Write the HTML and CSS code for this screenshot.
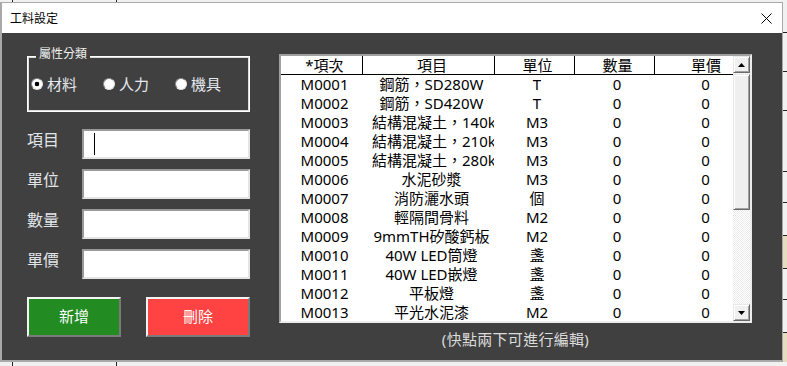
FILE: index.html
```html
<!DOCTYPE html>
<html lang="zh-Hant">
<head>
<meta charset="utf-8">
<title>工料設定</title>
<link rel="stylesheet" href="styles.css">
</head>
<body>
<div class="window">
  <div class="titlebar">
    <span class="title">工料設定</span>
    <svg class="close" width="11" height="11" viewBox="0 0 11 11"><path d="M0.5 0.5L10.5 10.5M10.5 0.5L0.5 10.5" stroke="#000" stroke-width="1" fill="none"/></svg>
  </div>
  <div class="client">
    <div class="left">
      <div class="group">
        <span class="legend">屬性分類</span>
        <div class="radios">
          <div class="radio-item"><span class="radio checked"></span><span class="rlabel">材料</span></div>
          <div class="radio-item"><span class="radio"></span><span class="rlabel">人力</span></div>
          <div class="radio-item"><span class="radio"></span><span class="rlabel">機具</span></div>
        </div>
      </div>
      <div class="fields">
        <div class="field"><span class="flabel">項目</span><div class="textbox"><span class="caret"></span></div></div>
        <div class="field"><span class="flabel">單位</span><div class="textbox"></div></div>
        <div class="field"><span class="flabel">數量</span><div class="textbox"></div></div>
        <div class="field"><span class="flabel">單價</span><div class="textbox"></div></div>
      </div>
      <div class="buttons">
        <div class="btn btn-add">新增</div>
        <div class="btn btn-del">刪除</div>
      </div>
    </div>
    <div class="right">
      <div class="listbox">
        <div class="list">
          <div class="row head"><span class="c1">*項次</span><span class="c2">項目</span><span class="c3">單位</span><span class="c4">數量</span><span class="c5">單價</span></div>
          <div class="row"><span class="c1">M0001</span><span class="c2">鋼筋，SD280W</span><span class="c3">T</span><span class="c4">0</span><span class="c5">0</span></div>
          <div class="row"><span class="c1">M0002</span><span class="c2">鋼筋，SD420W</span><span class="c3">T</span><span class="c4">0</span><span class="c5">0</span></div>
          <div class="row"><span class="c1">M0003</span><span class="c2">結構混凝土，140kgf/cm2</span><span class="c3">M3</span><span class="c4">0</span><span class="c5">0</span></div>
          <div class="row"><span class="c1">M0004</span><span class="c2">結構混凝土，210kgf/cm2</span><span class="c3">M3</span><span class="c4">0</span><span class="c5">0</span></div>
          <div class="row"><span class="c1">M0005</span><span class="c2">結構混凝土，280kgf/cm2</span><span class="c3">M3</span><span class="c4">0</span><span class="c5">0</span></div>
          <div class="row"><span class="c1">M0006</span><span class="c2">水泥砂漿</span><span class="c3">M3</span><span class="c4">0</span><span class="c5">0</span></div>
          <div class="row"><span class="c1">M0007</span><span class="c2">消防灑水頭</span><span class="c3">個</span><span class="c4">0</span><span class="c5">0</span></div>
          <div class="row"><span class="c1">M0008</span><span class="c2">輕隔間骨料</span><span class="c3">M2</span><span class="c4">0</span><span class="c5">0</span></div>
          <div class="row"><span class="c1">M0009</span><span class="c2">9mmTH矽酸鈣板</span><span class="c3">M2</span><span class="c4">0</span><span class="c5">0</span></div>
          <div class="row"><span class="c1">M0010</span><span class="c2">40W LED筒燈</span><span class="c3">盞</span><span class="c4">0</span><span class="c5">0</span></div>
          <div class="row"><span class="c1">M0011</span><span class="c2">40W LED嵌燈</span><span class="c3">盞</span><span class="c4">0</span><span class="c5">0</span></div>
          <div class="row"><span class="c1">M0012</span><span class="c2">平板燈</span><span class="c3">盞</span><span class="c4">0</span><span class="c5">0</span></div>
          <div class="row"><span class="c1">M0013</span><span class="c2">平光水泥漆</span><span class="c3">M2</span><span class="c4">0</span><span class="c5">0</span></div>
        </div>
        <div class="scrollbar">
          <div class="sb-btn"><svg width="7" height="4" viewBox="0 0 7 4"><polygon points="3.5,0 7,4 0,4" fill="#000"/></svg></div>
          <div class="sb-track"><div class="sb-thumb"></div></div>
          <div class="sb-btn"><svg width="7" height="4" viewBox="0 0 7 4"><polygon points="0,0 7,0 3.5,4" fill="#000"/></svg></div>
        </div>
      </div>
      <div class="hint">(快點兩下可進行編輯)</div>
    </div>
  </div>
</div>
</body>
</html>
```

FILE: styles.css
```css
html, body {
  margin: 0;
  padding: 0;
  width: 787px;
  height: 366px;
  overflow: hidden;
}

body {
  font-family: "Noto Sans", "Noto Sans CJK TC", sans-serif;
  background:
    linear-gradient(#222, #222) 0 32px / 100% 1px no-repeat,
    linear-gradient(#222, #222) 0 71px / 100% 1px no-repeat,
    linear-gradient(#222, #222) 0 110px / 100% 1px no-repeat,
    linear-gradient(#222, #222) 0 171px / 100% 1px no-repeat,
    linear-gradient(#222, #222) 0 202px / 100% 1px no-repeat,
    linear-gradient(#222, #222) 0 235px / 100% 1px no-repeat,
    linear-gradient(#222, #222) 0 268px / 100% 1px no-repeat,
    linear-gradient(#222, #222) 0 299px / 100% 1px no-repeat,
    linear-gradient(#222, #222) 0 332px / 100% 1px no-repeat,
    linear-gradient(#222, #222) 12px 0 / 1px 100% no-repeat,
    linear-gradient(#222, #222) 116px 0 / 1px 100% no-repeat,
    linear-gradient(#e6dcc0, #e6dcc0) 0 236px / 100% 32px no-repeat,
    linear-gradient(#e6dcc0, #e6dcc0) 0 333px / 100% 29px no-repeat,
    #f1f1f1;
}

.window {
  width: 783px;
  margin-top: 2px;
  box-sizing: border-box;
  border-style: solid;
  border-color: #a9a9a9;
  border-width: 1px 1px 2px 2px;
  background: #404040;
}

.titlebar {
  height: 30px;
  background: #fff;
  display: flex;
  align-items: center;
  justify-content: space-between;
  padding: 0 10px 0 8px;
}

.title {
  font-family: "Noto Sans CJK TC", sans-serif;
  font-size: 12px;
  line-height: 16px;
  color: #000;
}

.close {
  display: block;
}

.client {
  height: 327px;
  box-sizing: border-box;
  padding: 21px 30px 0 25px;
  display: flex;
  align-items: flex-start;
  gap: 29px;
}

.left {
  width: 223px;
}

.group {
  position: relative;
  margin-top: 2px;
  height: 56px;
  box-sizing: border-box;
  border: 1px solid #ffffff;
  box-shadow: inset 0 0 0 1px #dcdcdc;
}

.legend {
  position: absolute;
  left: 8px;
  top: -11px;
  padding: 0 3px;
  background: #404040;
  color: #f2f2f2;
  font-size: 12px;
  line-height: 16px;
}

.radios {
  height: 100%;
  display: flex;
  align-items: center;
  padding-left: 3px;
}

.radio-item {
  width: 72px;
  display: flex;
  align-items: center;
  gap: 4px;
}

.radio {
  width: 12px;
  height: 12px;
  box-sizing: border-box;
  border-radius: 50%;
  border: 1px solid;
  border-color: #8a8a8a #e6e6e6 #e6e6e6 #8a8a8a;
  background: #fff;
}

.radio.checked {
  background: radial-gradient(circle, #000 0 2px, #fff 2.6px);
}

.rlabel {
  font-size: 15px;
  line-height: 20px;
  color: #e4e9ee;
}

.fields {
  margin-top: 17px;
  display: flex;
  flex-direction: column;
  gap: 10px;
}

.field {
  display: flex;
  height: 30px;
}

.flabel {
  width: 55px;
  font-size: 16px;
  line-height: 22px;
  color: #e2e6ea;
}

.textbox {
  width: 168px;
  height: 30px;
  box-sizing: border-box;
  border: 2px solid;
  border-color: #999 #e4e4e4 #e4e4e4 #999;
  background: #fff;
  padding: 2px 0 0 10px;
}

.caret {
  display: block;
  width: 1px;
  height: 22px;
  background: #000;
}

.buttons {
  margin-top: 18px;
  display: flex;
  gap: 25px;
}

.btn {
  height: 40px;
  box-sizing: border-box;
  border: 2px solid;
  border-color: #f4f4f4 #7a7a7a #7a7a7a #f4f4f4;
  color: #fff;
  font-size: 15px;
  line-height: 35px;
  text-align: center;
}

.btn-add {
  width: 94px;
  background: #228b22;
}

.btn-del {
  width: 104px;
  background: #ff4242;
}

.right {
  width: 473px;
}

.listbox {
  height: 269px;
  box-sizing: border-box;
  border: 2px solid;
  border-color: #a0a0a0 #ececec #ececec #a0a0a0;
  background: #fff;
  display: flex;
}

.list {
  width: 452px;
  overflow: hidden;
}

.row {
  display: grid;
  grid-template-columns: 81px 132px 80px 80px 79px;
  height: 19px;
  font-size: 15px;
  line-height: 19px;
  color: #000;
}

.row span {
  white-space: nowrap;
  overflow: hidden;
  text-align: center;
  padding-left: 6px;
  box-sizing: border-box;
}

.row .c2 {
  padding: 0 3px 0 10px;
}

.row .c5 {
  padding: 0 3px 0 27px;
}

.row.head {
  height: 19px;
  line-height: 18px;
  box-sizing: border-box;
  border-bottom: 1px solid #000;
}

.row.head .c2,
.row.head .c3,
.row.head .c4,
.row.head .c5 {
  border-left: 1px solid #000;
}

.scrollbar {
  width: 17px;
  display: flex;
  flex-direction: column;
}

.sb-btn {
  height: 17px;
  box-sizing: border-box;
  border: 1px solid;
  border-color: #e8e8e8 #696969 #696969 #e8e8e8;
  box-shadow: inset 1px 1px #fff, inset -1px -1px #a0a0a0;
  background: #f0f0f0;
  display: flex;
  align-items: center;
  justify-content: center;
}

.sb-btn svg {
  display: block;
}

.sb-track {
  flex: 1;
  padding-top: 1px;
  background: repeating-conic-gradient(#ffffff 0 25%, #ebebeb 0 50%) 0 0 / 2px 2px;
}

.sb-thumb {
  height: 136px;
  box-sizing: border-box;
  border: 1px solid;
  border-color: #e8e8e8 #696969 #696969 #e8e8e8;
  box-shadow: inset 1px 1px #fff, inset -1px -1px #a0a0a0;
  background: #efefef;
}

.hint {
  margin-top: 7px;
  text-align: center;
  font-size: 15px;
  line-height: 18px;
  letter-spacing: 0.3px;
  color: #dcdcdc;
}
```
